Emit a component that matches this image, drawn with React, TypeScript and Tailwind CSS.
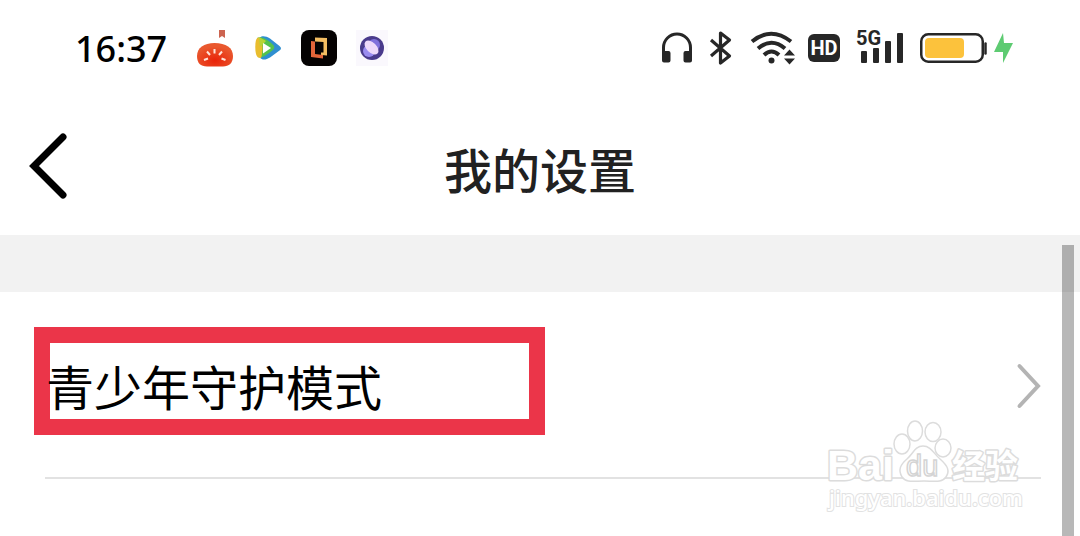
function TomatoIcon() {
  return (
    <svg className="h-10 w-10" viewBox="0 0 40 40" aria-hidden="true">
      <defs>
        <radialGradient id="tomato" cx="0.5" cy="0.75" r="0.6">
          <stop offset="0" stopColor="#ea2208" />
          <stop offset="1" stopColor="#e9582e" />
        </radialGradient>
      </defs>
      <path d="M24 2h6v8l-3-2-3 2z" fill="#cc6450" />
      <path d="M19.500 15C31 15 38 20 38 28c0 7-4 10.500-10 10.500H12C5.500 38.500 2 35 2 28c0-8 7-13 17.500-13z" fill="url(#tomato)" />
      <g stroke="#ffe3d8" strokeWidth="2">
        <path d="M19.500 21v4.500M12 23.500l3 3.500M27 23.500l-3 3.500M9 32l4-1.500M30.500 32l-4-1.500" />
      </g>
    </svg>
  );
}

function VideoIcon() {
  return (
    <svg className="h-7 w-7" viewBox="0 0 28 28" aria-hidden="true">
      <path d="M6 3.500C8 1.500 12 2 16 4.500l9.500 7.500c2 1.500 2 3 0 4.500l-9.500 7c-4 2.500-8 3-10 0z" fill="#2f8fd0" />
      <path d="M3 4c3-2 8 0 13 4 5 4 6 6 1 9.500-5 4-10 7-13 5.500z" fill="#54c24c" />
      <path d="M2 6c1-3 3-3 5-2 2 4 2 15 0 20-3 0-4-1-5-4-1-4-1-10 0-14z" fill="#e9bd2e" />
      <path d="M5 4c3 0 5 2 7 3L6 13z" fill="#b7d434" />
      <path d="M9 9l8 5-8 5.500z" fill="#fff" />
    </svg>
  );
}

function DoorIcon() {
  return (
    <svg className="h-9 w-9" viewBox="0 0 36 36" aria-hidden="true">
      <rect width="36" height="36" rx="8" fill="#050202" />
      <path d="M14 7.500L26 8v17.500l-6-.5v-2.500h2.500V12L14 11.500z" fill="#f3bd62" />
      <path d="M10 11l4 .5V24l8 1v3.500L10 27z" fill="#e4653a" />
    </svg>
  );
}

function PlanetIcon() {
  return (
    <span className="flex h-9 w-8 items-center justify-center bg-[#faf8fd]">
      <svg className="h-6 w-6" viewBox="0 0 24 24" aria-hidden="true">
        <circle cx="12" cy="12" r="12" fill="#4a3b8c" />
        <circle cx="9" cy="15" r="6" fill="#9a8cf0" />
        <circle cx="14" cy="9" r="6" fill="#8171dc" />
        <ellipse cx="11.500" cy="11.500" rx="8.500" ry="5" transform="rotate(45 11.5 11.5)" fill="#eed9fa" />
      </svg>
    </span>
  );
}

function StatusIcons() {
  return (
    <div className="flex items-center text-[#272727]">
      <svg className="h-10 w-8" viewBox="0 0 32 40" fill="none" aria-label="耳机">
        <path d="M2.500 29V19.500a13.500 13.500 0 0 1 27 0v9.500" stroke="currentColor" strokeWidth="3" />
        <path d="M1 23h6.500q2 0 2 2v7.500q0 2-2 2H3q-2 0-2-2zM31 23h-6.500q-2 0-2 2v7.500q0 2 2 2H29q2 0 2-2z" fill="currentColor" />
      </svg>
      <svg className="ml-4 h-10 w-6" viewBox="0 0 24 40" fill="none" aria-label="蓝牙">
        <path d="M2 12l18.500 16-9 7V5l9 7L2 28" stroke="currentColor" strokeWidth="3.200" strokeLinejoin="round" />
      </svg>
      <svg className="ml-4 h-10 w-12" viewBox="0 0 48 40" fill="none" aria-label="无线网络">
        <g stroke="currentColor" strokeWidth="4">
          <path d="M3 13.500Q22 -2 42 13.500" />
          <path d="M9 20.500Q22.500 9 36 20.500" />
          <path d="M15 27Q22.500 20 30 27" />
        </g>
        <circle cx="22.500" cy="32.500" r="3" fill="currentColor" />
        <path d="M35 27.500l5.500-6 5.500 6zM35 30.500h11l-5.500 6z" fill="currentColor" />
      </svg>
      <span className="ml-[11px] flex h-7 w-8 items-center justify-center rounded-md bg-[#272727] font-['Liberation_Sans_Narrow','Roboto',sans-serif] text-xl font-bold text-white">
        HD
      </span>
      <div className="relative ml-4 h-10 w-12">
        <svg className="h-10 w-12" viewBox="0 0 48 40" fill="currentColor" aria-label="信号">
          <rect x="5" y="23" width="6" height="12" rx="1" />
          <rect x="17" y="20" width="6" height="15" rx="1" />
          <rect x="29" y="13" width="6" height="22" rx="1" />
          <rect x="41" y="5" width="6" height="30" rx="1" />
        </svg>
        <span className="absolute top-0 left-0 font-['Liberation_Sans_Narrow','Roboto',sans-serif] text-xl leading-5 font-bold">
          5G
        </span>
      </div>
      <svg className="ml-4 h-10 w-[68px]" viewBox="0 0 68 40" fill="none" aria-label="电量">
        <rect x="1.250" y="6.250" width="61.500" height="27.500" rx="7" stroke="currentColor" strokeWidth="2.500" />
        <rect x="5" y="10" width="39" height="20" rx="4" fill="#fcc23c" />
        <path d="M65.500 15.500v10" stroke="currentColor" strokeWidth="2.500" strokeLinecap="round" />
      </svg>
      <svg className="ml-1 h-10 w-6" viewBox="0 0 24 40" aria-label="充电中">
        <path d="M11 5L2 24h9v11l10-20h-9z" fill="#5ecb72" />
      </svg>
    </div>
  );
}

function Watermark() {
  return (
    <svg
      className="pointer-events-none absolute right-[54px] bottom-[20px] h-[100px] w-[200px]"
      viewBox="0 0 200 100"
      fill="#fff"
      stroke="#dcdcdc"
      aria-hidden="true"
    >
      <g className="font-['Liberation_Sans','Noto_Sans_CJK_SC',sans-serif] font-bold" paintOrder="stroke" strokeWidth="3" strokeLinejoin="round">
        <text x="1" y="64" fontSize="43">Bai</text>
        <text x="126" y="62" fontSize="33" className="font-['Noto_Sans_CJK_SC',sans-serif]">经验</text>
      </g>
      <g strokeWidth="1.500">
        <path d="M97 30c8 0 11 8 17 13 8 7 10 12 6 18-4 6-12 4-22 4s-18 2-22-4c-4-7-2-12 5-18 6-5 8-13 16-13z" />
        <ellipse cx="76" cy="28" rx="8" ry="10" />
        <ellipse cx="89" cy="15" rx="7.500" ry="10" />
        <ellipse cx="107" cy="16" rx="8" ry="9.500" />
        <ellipse cx="117" cy="32" rx="8" ry="9" />
      </g>
      <text x="80" y="60" fontSize="29" strokeWidth="1.500" stroke="#d4d4d4" className="font-['Liberation_Sans',sans-serif]">du</text>
      <text x="3" y="90" fontSize="22" strokeWidth="2" stroke="#e2e2e2" paintOrder="stroke" className="font-['Noto_Sans',sans-serif] font-medium">jingyan.baidu.com</text>
    </svg>
  );
}

export default function App() {
  return (
    <div className="flex min-h-screen flex-col bg-white font-['Noto_Sans','Noto_Sans_CJK_SC',sans-serif]">
      <div className="flex h-24 items-center justify-between pr-16 pl-[75px]">
        <div className="flex items-center">
          <time className="pt-0.5 text-4xl font-medium text-black">16:37</time>
          <div className="ml-7 flex items-center gap-[19px]">
            <TomatoIcon />
            <VideoIcon />
            <DoorIcon />
            <PlanetIcon />
          </div>
        </div>
        <StatusIcons />
      </div>

      <header className="grid h-[139px] grid-cols-[80px_1fr_80px] items-center">
        <button type="button" aria-label="返回" className="pl-7">
          <svg className="h-[70px] w-11" viewBox="0 0 44 70" fill="none">
            <path d="M35 6L6 35l29 29" stroke="#000" strokeWidth="7" strokeLinecap="round" />
          </svg>
        </button>
        <h1 className="pt-1 text-center font-['Noto_Sans_CJK_SC',sans-serif] text-5xl font-medium text-[#212121]">我的设置</h1>
      </header>

      <main className="relative flex-1">
        <div className="h-[57px] bg-[#f2f2f2]" />
        <a href="#guard" className="flex items-center justify-between pt-[35px] pr-[37px] pb-[42px] pl-[34px]">
          <span className="flex h-[108px] w-[511px] items-center border-16 border-[#eb3549] font-['Noto_Sans_CJK_SC',sans-serif] whitespace-nowrap text-black">
            <span className="-ml-1 pt-2 text-5xl leading-12">青少年守护模式</span>
          </span>
          <svg className="mt-2.5 h-12 w-7" viewBox="0 0 28 48" fill="none" aria-hidden="true">
            <path d="M4.500 4L23 24 4.500 44" stroke="#b4b4b4" strokeWidth="4" strokeLinecap="round" />
          </svg>
        </a>
        <hr className="mr-[39px] ml-[45px] border-t-2 border-[#e2e2e2]" />
        <Watermark />
        <div className="absolute top-[10px] right-[6px] bottom-0 w-3 bg-black/28" />
      </main>
    </div>
  );
}
